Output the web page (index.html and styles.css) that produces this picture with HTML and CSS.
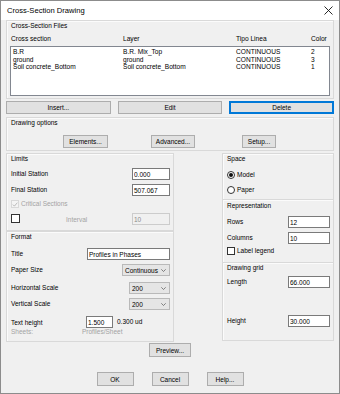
FILE: index.html
```html
<!DOCTYPE html>
<html>
<head>
<meta charset="utf-8">
<link rel="stylesheet" href="styles.css">
</head>
<body>
<div class="window">
  <div class="titlebar">
    <span class="title">Cross-Section Drawing</span>
    <svg class="close" width="9" height="9" viewBox="0 0 9 9"><path d="M0.5 0.5L8.5 8.5M8.5 0.5L0.5 8.5" stroke="#111" stroke-width="0.9" fill="none"/></svg>
  </div>
  <div class="content">
    <section class="group files">
      <div class="legend">Cross-Section Files</div>
      <div class="cols head"><span>Cross section</span><span>Layer</span><span>Tipo Linea</span><span>Color</span></div>
      <div class="list">
        <div class="cols row"><span>B.R</span><span>B.R. Mix_Top</span><span>CONTINUOUS</span><span>2</span></div>
        <div class="cols row"><span>ground</span><span>ground</span><span>CONTINUOUS</span><span>3</span></div>
        <div class="cols row"><span>Soil concrete_Bottom</span><span>Soil concrete_Bottom</span><span>CONTINUOUS</span><span>1</span></div>
      </div>
    </section>

    <div class="btnrow3">
      <button class="btn">Insert...</button>
      <button class="btn">Edit</button>
      <button class="btn default">Delete</button>
    </div>

    <section class="group options">
      <div class="legend">Drawing options</div>
      <div class="optrow">
        <button class="btn b-elements">Elements...</button>
        <button class="btn b-advanced">Advanced...</button>
        <button class="btn b-setup">Setup...</button>
      </div>
    </section>

    <div class="lower">
      <div class="col-left">
        <section class="group limits">
          <div class="legend">Limits</div>
          <div class="frow r-initial"><span>Initial Station</span><input class="field w38" type="text" value="0.000"></div>
          <div class="frow r-final"><span>Final Station</span><input class="field w38" type="text" value="507.067"></div>
          <div class="checkline r-critical disabled"><span class="cbox dis"><svg width="7" height="7" viewBox="0 0 7 7"><path d="M1 3.6L2.8 5.4L6.2 1.4" stroke="#a8a8a8" stroke-width="0.9" fill="none"/></svg></span><span>Critical Sections</span></div>
          <div class="frow r-interval"><span class="cbox"></span><span class="disabled interval">Interval</span><input class="field w38 dfield" type="text" value="10" disabled></div>
        </section>
        <section class="group format">
          <div class="legend">Format</div>
          <div class="frow r-title"><span>Title</span><input class="field w83" type="text" value="Profiles in Phases"></div>
          <div class="frow r-paper"><span>Paper Size</span><div class="combo w48"><span>Continuous</span><svg width="5" height="3" viewBox="0 0 5 3"><path d="M0.3 0.3L2.5 2.5L4.7 0.3" stroke="#555" stroke-width="0.7" fill="none"/></svg></div></div>
          <div class="frow r-hscale"><span>Horizontal Scale</span><div class="combo w41"><span>200</span><svg width="5" height="3" viewBox="0 0 5 3"><path d="M0.3 0.3L2.5 2.5L4.7 0.3" stroke="#555" stroke-width="0.7" fill="none"/></svg></div></div>
          <div class="frow r-vscale"><span>Vertical Scale</span><div class="combo w41"><span>200</span><svg width="5" height="3" viewBox="0 0 5 3"><path d="M0.3 0.3L2.5 2.5L4.7 0.3" stroke="#555" stroke-width="0.7" fill="none"/></svg></div></div>
          <div class="trow r-text"><span class="tlabel">Text height</span><input class="field w27" type="text" value="1.500"><span class="unit">0.300 ud</span></div>
          <div class="trow sheets disabled"><span class="tlabel sl">Sheets:</span><span>Profiles/Sheet</span></div>
        </section>
      </div>
      <div class="col-right">
        <section class="group space">
          <div class="legend">Space</div>
          <div class="checkline r-model"><span class="radio on"></span><span>Model</span></div>
          <div class="checkline r-paper2"><span class="radio"></span><span>Paper</span></div>
        </section>
        <section class="group repr">
          <div class="legend">Representation</div>
          <div class="frow r-rows"><span>Rows</span><input class="field w42" type="text" value="12"></div>
          <div class="frow r-cols"><span>Columns</span><input class="field w42" type="text" value="10"></div>
          <div class="checkline r-label"><span class="cbox"></span><span>Label legend</span></div>
        </section>
        <section class="group grid">
          <div class="legend">Drawing grid</div>
          <div class="frow r-length"><span>Length</span><input class="field w42" type="text" value="66.000"></div>
          <div class="frow r-height"><span>Height</span><input class="field w42" type="text" value="30.000"></div>
        </section>
      </div>
    </div>

    <div class="preview-row"><button class="btn b-preview">Preview...</button></div>

    <div class="footer">
      <button class="btn b-foot">OK</button>
      <button class="btn b-foot">Cancel</button>
      <button class="btn b-foot">Help...</button>
    </div>
  </div>
</div>
</body>
</html>
```
FILE: styles.css
```css
* { box-sizing: border-box; margin: 0; padding: 0; }
body {
  margin: 0;
  width: 340px;
  height: 394px;
  overflow: hidden;
  font-family: "Liberation Sans", Arial, sans-serif;
  font-size: 6.5px;
  color: #000;
  background: #fff;
}
.window {
  width: 340px;
  height: 394px;
  border: 1px solid #8c8c8c;
  background: #f0f0f0;
  display: flex;
  flex-direction: column;
}
.titlebar {
  height: 19px;
  flex: none;
  background: #fff;
  display: flex;
  align-items: center;
  justify-content: space-between;
  padding: 0 6px 1px 6px;
}
.title { font-size: 7.6px; }
.close { display: block; }
.content {
  padding: 0 5px;
  display: flex;
  flex-direction: column;
}
.group {
  border: 1px solid #d9d9d9;
  box-shadow: inset 1px 1px 0 #fbfbfb;
  padding: 1px 4px 0 4px;
}
.legend { line-height: 8px; height: 8px; }

/* files */
.files { padding: 1px 3px 2px 3px; }
.files .legend { padding-left: 1px; }
.cols { display: grid; }
.head { grid-template-columns: 112px 113px 75px auto; margin-top: 5px; line-height: 8px; padding-left: 1px; font-size: 6.6px; }
.list {
  margin-top: 3px;
  height: 50px;
  background: #fff;
  border: 1px solid #828790;
  padding: 1px 0 0 2px;
}
.row { grid-template-columns: 110px 113px 75px auto; line-height: 7.5px; font-size: 6.6px; }

/* buttons */
.btn {
  font: inherit;
  color: #000;
  background: #e1e1e1;
  border: 1px solid #adadad;
  height: 13px;
  line-height: 11px;
  text-align: center;
  padding: 0;
}
.btn.default {
  border-color: #0078d7;
  box-shadow: inset 0 0 0 1px #0078d7;
}
.btnrow3 {
  margin-top: 2px;
  display: grid;
  grid-template-columns: 1fr 1fr 1fr;
  column-gap: 7px;
}
.options { margin-top: 3px; padding: 1px 4px 2px 4px; }
.optrow { margin-top: 8px; display: flex; }
.b-elements { width: 45px; margin-left: 52px; }
.b-advanced { width: 44px; margin-left: 43px; }
.b-setup { width: 34px; margin-left: 47px; }

/* lower area */
.lower {
  margin-top: 2px;
  display: flex;
  justify-content: space-between;
}
.col-left { width: 168px; display: flex; flex-direction: column; }
.col-right { width: 112px; display: flex; flex-direction: column; }
.limits { padding-bottom: 5px; }
.format { padding-bottom: 5px; }
.space { padding-bottom: 5px; }
.repr { padding-bottom: 7px; border-top: none; padding-top: 2px; }
.grid { padding-bottom: 13px; border-top: none; padding-top: 1px; }
.limits, .format, .space, .repr, .grid { padding-left: 4px; padding-right: 3px; }

.frow {
  display: flex;
  align-items: center;
  justify-content: space-between;
  height: 12px;
}
.frow > span:first-child { position: relative; top: -0.5px; }
.field {
  font: inherit;
  color: #000;
  height: 12px;
  background: #fff;
  border: 1px solid #7a7a7a;
  padding: 0 1px;
  outline: none;
}
.dfield {
  background: #f0f0f0;
  border-color: #cccccc;
  color: #8a8a8a;
}
.w38 { width: 38px; }
.w83 { width: 83px; }
.w42 { width: 42px; }
.w27 { width: 27px; }
.w48 { width: 48px; }
.w41 { width: 41px; }

.combo {
  height: 12px;
  background: #e5e5e5;
  border: 1px solid #b9b9b9;
  display: flex;
  align-items: center;
  justify-content: space-between;
  padding: 0 3px 0 2px;
}

.checkline {
  display: flex;
  align-items: center;
  height: 8px;
  line-height: 8px;
  gap: 2px;
}
.cbox {
  width: 8px;
  height: 8px;
  border: 1px solid #333;
  background: #fff;
  display: flex;
  align-items: center;
  justify-content: center;
  flex: none;
}
.cbox.dis { border-color: #d8d8d8; background: #f4f4f4; }
.radio {
  width: 8px;
  height: 8px;
  border: 1px solid #333;
  border-radius: 50%;
  background: #fff;
  display: flex;
  align-items: center;
  justify-content: center;
  flex: none;
}
.radio.on::after {
  content: "";
  width: 4px;
  height: 4px;
  border-radius: 50%;
  background: #111;
}
.disabled { color: #a3a3a3; }

.r-initial { margin-top: 5px; }
.r-final { margin-top: 4px; }
.r-critical { margin-top: 4px; padding-left: 0; }
.r-interval { margin-top: 5px; }
.r-interval .cbox { width: 9px; height: 9px; }
.interval { margin-left: 46px; margin-right: auto; }

.r-title { margin-top: 7px; }
.r-paper { margin-top: 4px; }
.r-hscale { margin-top: 6px; }
.r-vscale { margin-top: 4px; }
.trow { display: flex; align-items: center; }
.r-text { margin-top: 6px; height: 12px; }
.tlabel { width: 75px; }
.sl { width: 71px; }
.unit { margin-left: 4px; position: relative; top: -0.5px; }
.sheets { height: 8px; line-height: 8px; }

.r-model { margin-top: 8px; }
.r-paper2 { margin-top: 7px; }
.r-rows { margin-top: 6px; }
.r-cols { margin-top: 4px; }
.r-label { margin-top: 3px; }
.r-length { margin-top: 4px; }
.r-height { margin-top: 27px; }

.preview-row { margin-top: 1px; display: flex; justify-content: center; }
.b-preview { width: 42px; height: 14px; }
.footer {
  margin-top: 15px;
  display: flex;
  justify-content: center;
  gap: 18px;
}
.b-foot { width: 37px; height: 14px; }
```
